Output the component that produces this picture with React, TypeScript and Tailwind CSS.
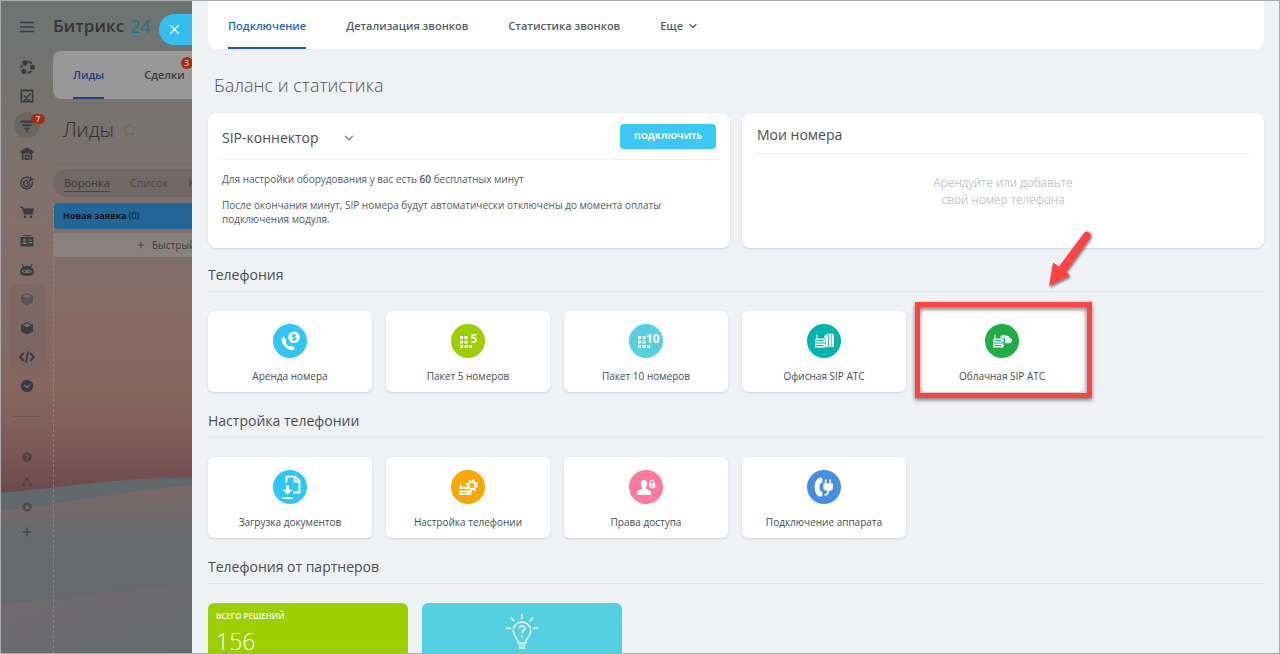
import type { ReactNode } from "react"
import { ChevronDown, Plus, Star, X } from "lucide-react"

type Tile = {
  title: string
  color: string
  icon: ReactNode
  marked?: boolean
}

const phoneTiles: Tile[] = [
  {
    title: "Аренда номера",
    color: "bg-[#2fc6f6]",
    icon: (
      <>
        <path d="M8.6 14.2c1-1.4 2.300-2 2.900-1.200l1.700 2.900c.4.800-.9 1.700-.5 2.700.7 1.600 1.900 2.900 3.400 3.700.9.500 1.900-.8 2.700-.4l2.600 1.600c.9.600.1 2-1.200 2.400-2.400.800-5.700-.5-8.300-3.400-2.800-3-4.100-6.300-3.300-8.300z" fill="#fff" />
        <circle cx="21" cy="13.300" r="5.800" fill="#fff" />
        <path d="M23 11.600c-.5-.9-3.700-1.100-3.700.3 0 1.500 3.700 1.100 3.700 2.700 0 1.500-3.300 1.400-3.900.3M21.100 9.600v7.400" fill="none" stroke="#2fc6f6" strokeWidth="1.200" />
      </>
    ),
  },
  { title: "Пакет 5 номеров", color: "bg-[#9dcf00]", icon: <Pack count="5" /> },
  { title: "Пакет 10 номеров", color: "bg-[#55d0e0]", icon: <Pack count="10" /> },
  {
    title: "Офисная SIP АТС",
    color: "bg-[#00b4ac]",
    icon: (
      <>
        <Router line="#00b4ac" />
        <path d="M17 12l4-2.500v13.500h-2v-9.300h-2z M21.800 9.500h2.500v13.500h-2.500z M24.900 9.500l1.900 1v12.500h-1.900z" fill="#fff" />
      </>
    ),
  },
  {
    title: "Облачная SIP АТС",
    color: "bg-[#1fae43]",
    marked: true,
    icon: (
      <>
        <path d="M15.500 13c.6-2.200 4.200-3 6-1.200 1.800-.3 3.200 1 3.200 2.300 1.800.3 2.600 1.700 2.100 3.200-.4 1.300-1.500 1.900-2.800 1.900h-4.200v-5.200h-4.300z" fill="#fff" />
        <Router line="#00b4ac" />
      </>
    ),
  },
]

const setupTiles: Tile[] = [
  {
    title: "Загрузка документов",
    color: "bg-[#2fc6f6]",
    icon: (
      <g fill="none" stroke="#fff" strokeWidth="1.900">
        <path d="M13.500 12.500V6.600h8.600l4.400 4.400v11.500h-6.500" />
        <path d="M21.500 6.500v5h5" />
        <path d="M14.500 15.500v5" strokeWidth="3" />
        <path d="M9.500 19.800h10l-5 5z" fill="#fff" stroke="none" />
        <path d="M9.500 28h10.500" />
      </g>
    ),
  },
  {
    title: "Настройка телефонии",
    color: "bg-[#f7a700]",
    icon: (
      <>
        <path d="M9.200 13.500h1v3h4.600l1.500 2.500H8.200v-2.500h1z M8 20.500h10.500l2 1.500v3H8z" fill="#fff" />
        <path d="M9.500 22.800h6.500" stroke="#f7a700" strokeWidth="1" />
        <circle cx="21" cy="15.500" r="3.600" fill="none" stroke="#fff" strokeWidth="2.200" />
        <circle cx="21" cy="15.500" r="5.300" fill="none" stroke="#fff" strokeWidth="1.800" strokeDasharray="2.080 2.080" />
      </>
    ),
  },
  {
    title: "Права доступа",
    color: "bg-[#ff799c]",
    icon: (
      <>
        <path d="M15 10c2.200 0 3.300 1.600 3.200 3.800-.1 1.700-.7 2.800-1.400 3.500v1.600c2.500.8 4.900 1.600 5.200 3.100l.2 3H8l.2-3c.3-1.500 2.500-2.300 5-3.100v-1.600c-.8-.7-1.400-1.800-1.400-3.500C11.700 11.600 12.800 10 15 10z" fill="#fff" />
        <rect x="20.200" y="13.500" width="6" height="4.800" rx=".6" fill="#fff" />
        <path d="M21.400 13.500v-1.500a1.800 1.800 0 0 1 3.600 0v1.500" fill="none" stroke="#fff" strokeWidth="1.100" />
        <path d="M23.200 15v1.800" stroke="#ff799c" strokeWidth="1" />
      </>
    ),
  },
  {
    title: "Подключение аппарата",
    color: "bg-[#468ee5]",
    icon: (
      <>
        <path d="M13.700 7.500c1.300 0 1.700.7 1.700 2v2.200c0 1.100-1.700 1.300-2.200 2.100-.9 1.600-.9 5 0 6.600.5.800 2.200 1 2.200 2.100v2.200c0 1.300-.5 1.900-1.700 1.900C10 26.600 7.600 22 7.600 17s2.400-9.500 6.100-9.500z" fill="#fff" />
        <path d="M18.700 9.500v5M23.200 9.500v5" stroke="#fff" strokeWidth="1.700" />
        <path d="M16.300 13.500h9.700v4.300c0 2.200-1.800 3.300-4.800 3.300s-4.900-1.100-4.900-3.300z" fill="#fff" />
        <path d="M21 20v2.500c0 1.600-1 2.300-3.500 2.300" fill="none" stroke="#fff" strokeWidth="1.700" />
      </>
    ),
  },
]

const menuIcons = [
  <g key="feed">
    <circle cx="6" cy="4" r="2.800" />
    <circle cx="13.500" cy="8.300" r="2.500" />
    <circle cx="4.800" cy="12.300" r="2.600" />
    <path d="M9.500 2.600c1.400.3 2.500 1 3.300 2.200M12.600 11.800c-1 1.300-2.200 1.900-4 2M2.600 9c-.3-1-.2-2 .2-3" fill="none" stroke="currentColor" strokeWidth="2" />
  </g>,
  <g key="tasks" fill="none" stroke="currentColor" strokeWidth="1.800">
    <rect x="2.400" y="2.400" width="11.200" height="11.200" />
    <path d="M5 7.500l2.400 2.500L11.500 5.500M5 11.700h6" strokeWidth="1.500" />
  </g>,
  <path key="crm" d="M1.500 3.500h13v2.200h-13zM3.500 7.200h9v2H3.500zM5.500 10.700h5v1.700h-5zM6.800 13.500h2.400v1.300H6.800z" />,
  <g key="shop">
    <path d="M8 1.500l6.500 3.600v2h-1.300V14H2.800V7.100H1.500v-2z" />
    <path d="M5 14V8h6v6M8 9.500v2.500M6.700 11.500h2.600" fill="none" stroke="#7d716c" />
  </g>,
  <g key="target" fill="none" stroke="currentColor" strokeWidth="1.500">
    <path d="M10.500 3A5.800 5.800 0 1 0 13.200 6.500" />
    <path d="M8.800 5.800A3 3 0 1 0 10.500 8M7.600 8.800L13 3.500M11.500 1.800v2.700h3" />
  </g>,
  <g key="cart">
    <path d="M1 2.500h2.800l.7 2H15l-1.600 6H5.200L2.800 4H1z" />
    <circle cx="6" cy="12.800" r="1.300" />
    <circle cx="12" cy="12.800" r="1.300" />
  </g>,
  <g key="card">
    <path d="M3.500 2h9v1h-9zM1.500 4h13v9.500h-13z" />
    <circle cx="5.500" cy="7.200" r="1.400" fill="#7f716c" />
    <path d="M3.200 11c.4-2.600 4.200-2.600 4.600 0zM9.500 6.500H13v1.200H9.500zM9.500 9H13v1.200H9.500z" fill="#7f716c" />
  </g>,
  <g key="robot">
    <path d="M3.500 1.800l1.300 2.700c2-.9 4.400-.9 6.400 0l1.300-2.700 1 .5-1.200 2.900c1.700 1.100 2.500 2.900 2.600 5.300 0 2.300-1.700 3.300-6.900 3.300s-6.900-1-6.900-3.300c.1-2.400.9-4.200 2.600-5.300L2.600 2.300z" />
    <rect x="3.300" y="7.700" width="9.400" height="3.400" rx="1.700" fill="#80716b" />
    <circle cx="5.600" cy="9.400" r="1" />
    <circle cx="10.400" cy="9.400" r="1" />
  </g>,
]

const groupIcons = [
  <Box key="box1" />,
  <Box key="box2" />,
  <path key="code" d="M4.600 4L1.300 8l3.300 4M11.400 4l3.300 4-3.300 4M9.300 2.500l-2.600 11" fill="none" stroke="currentColor" strokeWidth="2" />,
]

const footerIcons = [
  <g key="help">
    <circle cx="8" cy="8" r="6.500" />
    <path d="M6 6.500c0-2.600 4-2.600 4 0 0 1.500-2 1.400-2 3M8 10.700v1.500" fill="none" stroke="#79605c" strokeWidth="1.400" />
  </g>,
  <g key="map">
    <circle cx="8" cy="4" r="2" />
    <circle cx="4" cy="11.500" r="2.200" />
    <circle cx="12" cy="11.500" r="2.200" />
    <path d="M7.500 4L4 11.500M8.500 4L12 11.500" stroke="currentColor" />
  </g>,
  <g key="settings" fill="none" stroke="currentColor">
    <circle cx="8" cy="8" r="4" strokeWidth="2.200" />
    <circle cx="8" cy="8" r="5.700" strokeWidth="1.800" strokeDasharray="2.240 2.240" />
  </g>,
  <path key="add" d="M8 2v12M2 8h12" stroke="currentColor" strokeWidth="2.200" />,
]

function Box() {
  return (
    <>
      <path d="M2 4.800L8 2l6 2.800v6.700l-6 3-6-3z" />
      <path d="M3.500 5.200L8 7.300l4.500-2.100L8 3.300z" fill="#7c6a66" />
    </>
  )
}

function Pack({ count }: { count: string }) {
  return (
    <g fill="#fff">
      {[13, 17.500, 22].map((y) => (
        <g key={y}>
          <rect x="9" y={y - 1} width="3" height="3" />
          <rect x="13.500" y={y - 1} width="3" height="3" />
        </g>
      ))}
      <rect x="18" y="21" width="3" height="3" />
      <text x={count === "5" ? 19.500 : 17} y="19" fontSize="12" fontWeight="700">{count}</text>
    </g>
  )
}

function Router({ line }: { line: string }) {
  return (
    <>
      <path d="M9.500 10.500h1v4h8v4H8v-3l1.500-1zM8 19.500h10.500v4H8z" fill="#fff" />
      <path d="M9.500 16.600h7M9.500 21.500h7M19.500 14v5" stroke={line} strokeWidth="1" />
    </>
  )
}

function SideIcon({ children, small = false }: { children: ReactNode; small?: boolean }) {
  return (
    <svg viewBox="0 0 16 16" fill="currentColor" aria-hidden="true" className={small ? "size-3" : "size-4"}>
      {children}
    </svg>
  )
}

function Background() {
  return (
    <svg viewBox="0 0 192 654" preserveAspectRatio="none" className="absolute inset-0 size-full" aria-hidden="true">
      <defs>
        <linearGradient id="sky" x1="0" y1="0" x2="0" y2="1">
          <stop offset="0" stopColor="#6c7473" />
          <stop offset=".2" stopColor="#77736f" />
          <stop offset=".45" stopColor="#82706a" />
          <stop offset=".8" stopColor="#87665f" />
          <stop offset=".92" stopColor="#7b5755" />
          <stop offset="1" stopColor="#6c4a4b" />
        </linearGradient>
        <linearGradient id="dune" x1="0" y1="0" x2="0" y2="1">
          <stop offset="0" stopColor="#7c6867" />
          <stop offset=".3" stopColor="#676b6d" />
          <stop offset="1" stopColor="#616a6d" />
        </linearGradient>
        <linearGradient id="front" x1="0" y1="0" x2="1" y2="1">
          <stop offset="0" stopColor="#716b6e" />
          <stop offset="1" stopColor="#666a6e" />
        </linearGradient>
      </defs>
      <rect width="192" height="494" fill="url(#sky)" />
      <path d="M0 493C60 489 110 478 192 478v60H0z" fill="#62696c" />
      <path d="M0 511c60-6 120-20 192-25v168H0z" fill="url(#dune)" />
      <path d="M0 606c60-7 130-18 192-22v70H0z" fill="url(#front)" />
    </svg>
  )
}

function Sidebar() {
  return (
    <aside className="flex w-[52px] shrink-0 flex-col items-center text-[#373c43]">
      <button aria-label="Меню" className="flex h-[51px] items-center">
        <svg viewBox="0 0 14 12" className="h-3 w-[14px]" stroke="currentColor" strokeWidth="1.300" aria-hidden="true">
          <path d="M0 1.500h14M0 6h14M0 10.500h14" />
        </svg>
      </button>
      {menuIcons.map((icon, i) => (
        <a href="#" key={i} className="relative flex h-[29px] w-9 items-center justify-center">
          {i === 2 && <span className="absolute top-0.5 left-[5px] size-[26px] rounded-full bg-[#6b6564]" />}
          <span className="relative">
            <SideIcon>{icon}</SideIcon>
          </span>
          {i === 2 && (
            <span className="absolute top-1 right-0 flex h-[10px] w-[14px] items-center justify-center rounded-full bg-[#a32d14] text-[8px] font-bold text-[#bdb3b0]">7</span>
          )}
        </a>
      ))}
      <div className="rounded-lg bg-[#7a6662]/60">
        {groupIcons.map((icon, i) => (
          <a href="#" key={i} className={`flex h-[29px] w-9 items-center justify-center ${i === 0 ? "opacity-50" : ""}`}>
            <SideIcon>{icon}</SideIcon>
          </a>
        ))}
      </div>
      <button aria-label="Развернуть" className="flex h-[29px] items-center">
        <SideIcon>
          <circle cx="8" cy="8" r="6.200" />
          <path d="M5.300 7l2.700 2.500L10.700 7" fill="none" stroke="#86706a" strokeWidth="1.600" />
        </SideIcon>
      </button>
      <hr className="mt-4 mb-[27px] w-7 border-[#6e5451]" />
      {footerIcons.map((icon, i) => (
        <a href="#" key={i} className="flex h-[25px] items-center opacity-75">
          <SideIcon small>{icon}</SideIcon>
        </a>
      ))}
    </aside>
  )
}

function CrmPage() {
  return (
    <div className="flex w-[480px] shrink-0 flex-col whitespace-nowrap">
      <div className="flex h-[50px] items-center gap-1.5 text-[17px] font-semibold text-[#363534]">
        Битрикс <span className="text-lg font-medium text-[#1d7593]">24</span>
      </div>
      <nav className="flex h-12 rounded-lg bg-[#989898] px-5 text-[11px] font-semibold">
        <a href="#" className="flex items-center border-b-2 border-[#24427f] pt-0.5 text-[#1d3c85]">Лиды</a>
        <a href="#" className="relative ml-10 flex items-center text-[#363b41]">
          Сделки
          <span className="absolute top-1.5 -right-2 flex size-3 items-center justify-center rounded-full bg-[#a32d14] text-[9px] text-[#c5bbb8]">3</span>
        </a>
      </nav>
      <div className="flex h-[62px] items-center gap-2 border-b border-[#80797a] pl-[10px]">
        <h1 className="text-xl font-light text-[#302e2d]">Лиды</h1>
        <Star size={15} strokeWidth={1} className="text-[#5e6468]" />
        <button aria-label="Создать" className="ml-[52px] h-8 w-24 rounded-sm bg-[#728f13]" />
      </div>
      <div className="mt-2 flex h-7 items-center gap-5 rounded-full bg-[#6e6562]/70 pl-[11px] text-[11px] text-[#47494b]">
        <a href="#" className="border-b border-[#434649] leading-4 text-[#35393c]">Воронка</a>
        <a href="#">Список</a>
        <a href="#">Календарь</a>
      </div>
      <div className="mt-1.5 flex flex-1 flex-col border-l border-dashed border-[#a0908b]/60">
        <div className="flex h-[26px] items-center gap-0.5 rounded-sm bg-[#226798] pl-[9px] text-[9px] font-bold text-[#0a1420]">
          Новая заявка <span className="font-normal">(0)</span>
        </div>
        <button className="mt-1 flex h-6 items-center gap-1.5 rounded-sm bg-[#8b8280] pl-[82px] text-[10px] text-[#383b40]">
          <Plus size={10} /> Быстрый лид
        </button>
      </div>
    </div>
  )
}

function TileCard({ tile }: { tile: Tile }) {
  return (
    <a href="#" className="relative flex h-[81px] w-[164px] flex-col items-center rounded-md bg-white pt-[13px] text-[10px] font-medium text-[#454e5a] shadow-sm">
      <span className={`size-[34px] rounded-full ${tile.color}`}>
        <svg viewBox="0 0 34 34" className="size-full" aria-hidden="true">{tile.icon}</svg>
      </span>
      <span className="mt-2.5 leading-4">{tile.title}</span>
      {tile.marked && (
        <>
          <span className="absolute -top-[9px] -right-2 -bottom-1.5 -left-[5px] border-5 border-[#ff4343] shadow-[0_2px_4px_rgba(0,0,0,0.5),inset_0_2px_4px_rgba(0,0,0,0.5)]" />
          <svg viewBox="0 0 50 64" className="absolute -top-[82px] left-[125px] h-16 w-[50px] drop-shadow-[1px_2px_1px_rgba(0,0,0,0.45)]" fill="#ff4343" aria-hidden="true">
            <path d="M38.500 4.500a4 4 0 0 1 6.600 4.600L21 42.500l4 4L4 57l4-23.500 6 4z" />
          </svg>
        </>
      )}
    </a>
  )
}

function Section({ title, children }: { title: string; children: ReactNode }) {
  return (
    <section>
      <h2 className="border-b border-[#e2e6e9] pt-[17px] pb-1.5 text-sm leading-5 text-[#4a4e53]">{title}</h2>
      <div className="mt-[19px] flex flex-wrap gap-[14px] pb-0.5">{children}</div>
    </section>
  )
}

function App() {
  return (
    <div className="flex h-screen overflow-hidden border border-[#a9abad] bg-[#eef2f4] font-['Open_Sans','Noto_Sans',sans-serif]">
      <div className="relative w-[191px] shrink-0">
        <div className="relative flex h-full overflow-hidden">
          <Background />
          <div className="relative flex">
            <Sidebar />
            <CrmPage />
          </div>
        </div>
        <button aria-label="Закрыть" className="absolute top-[13px] right-0 flex h-[31px] w-[33px] items-center rounded-l-full bg-[#35bff0] pl-2 text-white">
          <X size={15} strokeWidth={2} />
        </button>
      </div>

      <main className="min-w-0 flex-1 px-4 pr-[15px]">
        <nav className="flex h-12 gap-10 rounded-b-lg bg-white px-5 text-[11px] font-semibold text-[#525c69]">
          <a href="#" className="flex items-center border-b-2 border-[#1558d6] pt-1 text-[#2461d8]">Подключение</a>
          <a href="#" className="flex items-center pt-0.5">Детализация звонков</a>
          <a href="#" className="flex items-center pt-0.5">Статистика звонков</a>
          <button className="flex items-center gap-1 pt-0.5">Еще <ChevronDown size={12} strokeWidth={2.500} /></button>
        </nav>

        <h1 className="mt-6 pl-[6px] text-lg leading-6 font-light text-[#4f5459]">Баланс и статистика</h1>

        <div className="mt-4 grid grid-cols-2 gap-3">
          <section className="h-[135px] rounded-lg bg-white px-[14px] shadow-sm">
            <div className="flex h-[47px] items-center justify-between border-b border-[#eef0f2]">
              <div className="relative flex items-center pt-1">
                <select aria-label="Тариф" className="w-[136px] appearance-none bg-transparent text-sm text-[#4a4e53]">
                  <option>SIP-коннектор</option>
                </select>
                <ChevronDown size={14} strokeWidth={2.500} className="pointer-events-none absolute right-0.5 text-[#858c95]" />
              </div>
              <button className="h-[25px] rounded-sm bg-[#3bc8f5] px-[14px] text-[9px] font-bold text-white uppercase">Подключить</button>
            </div>
            <p className="mt-3 text-[10px] leading-[14px] text-[#535c66]">
              Для настройки оборудования у вас есть <b className="font-semibold">60</b> бесплатных минут
            </p>
            <p className="mt-3 max-w-[460px] text-[10px] leading-[14px] text-[#535c66]">
              После окончания минут, SIP номера будут автоматически отключены до момента оплаты подключения модуля.
            </p>
          </section>

          <section className="h-[135px] rounded-lg bg-white px-[15px] shadow-sm">
            <h2 className="flex h-[41px] items-center border-b border-[#e9ecee] pt-1 text-sm text-[#4a4e53]">Мои номера</h2>
            <p className="mt-5 text-center text-xs leading-[17px] font-light text-[#a9adb2]">
              Арендуйте или добавьте<br />свой номер телефона
            </p>
          </section>
        </div>

        <Section title="Телефония">
          {phoneTiles.map((tile) => <TileCard key={tile.title} tile={tile} />)}
        </Section>
        <Section title="Настройка телефонии">
          {setupTiles.map((tile) => <TileCard key={tile.title} tile={tile} />)}
        </Section>
        <Section title="Телефония от партнеров">
          <a href="#" className="flex h-[100px] w-[200px] flex-col rounded-md bg-[#9dcf00] px-2 pt-[7px] text-white">
            <span className="text-[8px] leading-3 font-semibold uppercase">Всего решений</span>
            <span className="mt-1 text-[23px] leading-[30px] font-light">156</span>
          </a>
          <a href="#" aria-label="Решения" className="flex h-[100px] w-[200px] justify-center rounded-md bg-[#55d0e0] pt-[10px]">
            <svg viewBox="0 0 34 38" className="h-[38px] w-[34px]" fill="none" stroke="#fff" strokeWidth="1.400" aria-hidden="true">
              <path d="M17 1v5M6 4.500l3.200 3.700M28 4.500l-3.200 3.700M1 14.500l5 1.300M33 14.500l-5 1.300" />
              <path d="M13.300 30c0-5-5-6-5-12.300a8.700 8.700 0 0 1 17.400 0C25.700 24 20.700 25 20.700 30z" />
              <path d="M13.500 32.500h7M14 35h6" />
              <path d="M14.300 15.500c.2-3.600 5.700-3.300 5.500 0-.2 2.300-2.800 2.100-2.800 4.700M17 22.500v1.800" />
            </svg>
          </a>
        </Section>
      </main>
    </div>
  )
}

export default App
